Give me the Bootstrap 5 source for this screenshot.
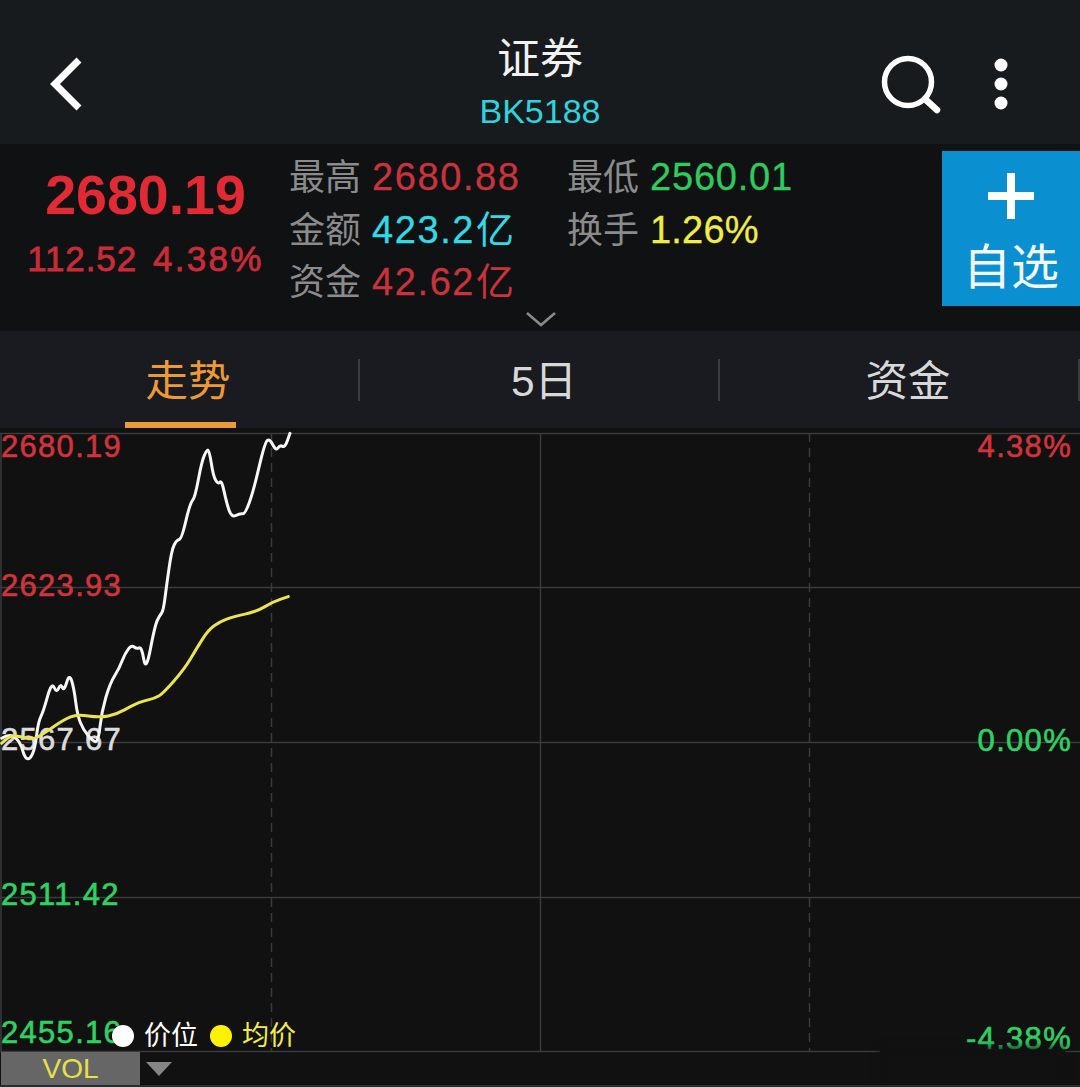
<!DOCTYPE html>
<html lang="zh-CN">
<head>
  <meta charset="UTF-8">
  <title>证券 BK5188</title>
  <meta name="viewport" content="width=device-width, initial-scale=1" />
  <link href="https://cdn.jsdelivr.net/npm/bootstrap@5.3.2/dist/css/bootstrap.min.css" rel="stylesheet">
  <style>
    body {
      background: #111112;
      font-family: "Liberation Sans", "Noto Sans CJK SC", sans-serif;
      overflow: hidden;
    }
    .top-bar { height: 144px; background: #171b1e; }
    .back-icon { left: 48px; top: 54px; }
    .title-main { font-size: 43px; line-height: 50px; color: #f2f2f2; padding-top: 34px; }
    .title-code { font-size: 34px; line-height: 40px; color: #2fd3dc; margin-top: 7px; }
    .search-icon { left: 878px; top: 50px; }
    .more-icon { left: 990px; top: 54px; }

    .quote-box { height: 187px; background: #101113; padding-top: 7px; }
    .price-col { width: 291px; }
    .price-big { font-size: 55.5px; line-height: 60px; font-weight: 700; color: #e22a35; margin-top: 14px; }
    .price-sub { font-size: 35px; line-height: 40px; color: #c92c36; margin-top: 14px; -webkit-text-stroke: .8px #c92c36; letter-spacing: .9px; }
    .price-sub span + span { margin-left: 16px; letter-spacing: 2.3px; }
    .stats-grid { display: grid; grid-template-columns: 278px 1fr; grid-auto-rows: 52.5px; flex-grow: 1; margin-left: -2px; }
    .stat-cell { font-size: 38px; line-height: 52.5px; white-space: nowrap; letter-spacing: 1.6px; -webkit-text-stroke: .3px; }
    .stat-name { font-size: 36px; letter-spacing: 0; color: #8b8b8b; margin-right: 11px; -webkit-text-stroke: 0; }
    .c-red { color: #c9333b; }
    .c-green { color: #2ecb5e; }
    .c-cyan { color: #30dbe6; }
    .c-yellow { color: #f2ec48; }
    .c-yi { font-size: 38px; letter-spacing: 0; margin-left: 1px; -webkit-text-stroke: 0; }
    .spacing-s { letter-spacing: .8px; }
    .spacing-xs { letter-spacing: .2px; }
    .add-btn { width: 138px; height: 155px; background: #0a8fd0; color: #f4f8fb; border-radius: 0; border: 0; padding: 0; display: flex; flex-direction: column; justify-content: flex-start; align-items: center; }
    .add-btn svg { display: block; margin-top: 22px; }
    .add-btn span { display: block; font-size: 48px; line-height: 56px; margin-top: 21px; white-space: nowrap; }
    .fold-icon { left: 525px; top: 311px; }

    .tab-bar { height: 97px; background: #191b20; }
    .tab-cell { width: 360px; font-size: 42.5px; color: #d8d8d8; }
    .tab-label { padding-top: 25px; line-height: 52px; }
    .tab-cell.on { color: #ec9a33; }
    .tab-line { left: 125px; width: 111px; height: 6px; bottom: 0; background: #ec9a33; }
    .tab-sep { width: 2px; height: 42px; background: #3a3c40; top: 28px; right: 0; }

    .chart-box { height: 659px; background: #111112; }
    .chart-svg { left: 0; top: 0; }
    .axis-txt { font-size: 31px; line-height: 36px; letter-spacing: 1.3px; white-space: nowrap; -webkit-text-stroke: .6px; }
    .axis-txt.c-red { color: #d1333b; }
    .axis-txt.c-green { color: #2ed162; }
    .axis-l { left: 1px; }
    .axis-r { right: 8px; }
    .y-1 { top: 1px; }
    .y-2 { top: 140px; }
    .y-3 { top: 294px; color: #dcdcdc; }
    .y-4 { top: 449px; }
    .y-5 { top: 587px; }
    .y-3r { top: 295px; }
    .y-5r { top: 593px; }
    .legend-row { left: 112px; top: 589px; font-size: 27px; line-height: 38px; }
    .dot { width: 22px; height: 22px; border-radius: 50%; }
    .dot-w { background: #fff; }
    .dot-y { background: #fff200; margin-left: 4px; }
    .leg-txt { margin-left: 2px; }
    .leg-txt-y { margin-left: 2px; }
    .vol-bar { left: 1px; right: 0; top: 624px; height: 33px; }
    .vol-tag { width: 139px; background: #666; color: #e6e04a; font-size: 28px; line-height: 33px; text-align: center; }
    .vol-arrow { margin-left: 6px; margin-top: 10px; }
    .smudge { left: 880px; width: 185px; top: 620px; height: 41px; background: #111112; filter: blur(4px); }
    .bottom-edge { left: 0; right: 0; bottom: 0; height: 2px; background: #2a2b2c; }
  </style>
</head>
<body>
  <!-- header -->
  <div class="top-bar position-relative text-center">
    <svg class="back-icon position-absolute" width="40" height="60" viewBox="0 0 40 60"><path d="M31 6 L7 30 L31 54" fill="none" stroke="#fff" stroke-width="7"/></svg>
    <div class="title-main">证券</div>
    <div class="title-code">BK5188</div>
    <svg class="search-icon position-absolute" width="66" height="66" viewBox="0 0 66 66"><circle cx="30" cy="32" r="23.5" fill="none" stroke="#fff" stroke-width="5.5"/><path d="M47 49 L59 60" stroke="#fff" stroke-width="6.500" stroke-linecap="round"/></svg>
    <svg class="more-icon position-absolute" width="22" height="60" viewBox="0 0 22 60"><circle cx="11" cy="11" r="6.500" fill="#fff"/><circle cx="11" cy="30" r="6.500" fill="#fff"/><circle cx="11" cy="49" r="6.500" fill="#fff"/></svg>
  </div>

  <!-- quote -->
  <div class="quote-box d-flex">
    <div class="price-col text-center">
      <div class="price-big">2680.19</div>
      <div class="price-sub"><span>112.52</span><span>4.38%</span></div>
    </div>
    <div class="stats-grid">
      <div class="stat-cell"><span class="stat-name">最高</span><span class="c-red">2680.88</span></div>
      <div class="stat-cell"><span class="stat-name">最低</span><span class="c-green spacing-s">2560.01</span></div>
      <div class="stat-cell"><span class="stat-name">金额</span><span class="c-cyan">423.2<span class="c-yi">亿</span></span></div>
      <div class="stat-cell"><span class="stat-name">换手</span><span class="c-yellow spacing-xs">1.26%</span></div>
      <div class="stat-cell"><span class="stat-name">资金</span><span class="c-red">42.62<span class="c-yi">亿</span></span></div>
    </div>
    <button type="button" class="btn add-btn">
      <svg width="46" height="46" viewBox="0 0 46 46"><path d="M23 0 V46 M0 23 H46" stroke="#fff" stroke-width="8"/></svg>
      <span>自选</span>
    </button>
  </div>
  <svg class="fold-icon position-absolute" width="32" height="16" viewBox="0 0 32 16"><path d="M2 2 L16 14 L30 2" fill="none" stroke="#8a8a8a" stroke-width="2.500"/></svg>

  <!-- tabs -->
  <div class="tab-bar d-flex">
    <div class="tab-cell on position-relative text-center">
      <div class="tab-label ps-3">走势</div>
      <div class="tab-line position-absolute"></div>
      <div class="tab-sep position-absolute"></div>
    </div>
    <div class="tab-cell position-relative text-center">
      <div class="tab-label ps-2">5日</div>
      <div class="tab-sep position-absolute"></div>
    </div>
    <div class="tab-cell position-relative text-center">
      <div class="tab-label ps-3">资金</div>
      <div class="tab-sep position-absolute"></div>
    </div>
  </div>

  <!-- chart -->
  <div class="chart-box position-relative">
    <svg class="chart-svg position-absolute" width="1080" height="659" viewBox="0 428 1080 659">
      <g stroke="#3b3b3b" stroke-width="1.500" fill="none">
        <path d="M0 433.500 H1080 M0 587.500 H1080 M0 742.500 H1080 M0 897.500 H1080 M0 1051.500 H880 M1065 1051.500 H1080"/>
        <path d="M1 433 V1051 M540.500 433 V1051"/>
        <path d="M271.500 433 V1051 M809.500 433 V1051" stroke-dasharray="9 6"/>
      </g>
    </svg>

    <span class="axis-txt axis-l y-1 c-red position-absolute">2680.19</span>
    <span class="axis-txt axis-l y-2 c-red position-absolute">2623.93</span>
    <span class="axis-txt axis-l y-3 position-absolute">2567.67</span>
    <span class="axis-txt axis-l y-4 c-green position-absolute">2511.42</span>
    <span class="axis-txt axis-l y-5 c-green position-absolute">2455.16</span>
    <span class="axis-txt axis-r y-1 c-red position-absolute">4.38%</span>
    <span class="axis-txt axis-r y-3r c-green position-absolute">0.00%</span>
    <span class="axis-txt axis-r y-5r c-green position-absolute">-4.38%</span>

    <svg class="chart-svg position-absolute" width="1080" height="659" viewBox="0 428 1080 659">
      <g transform="translate(0 425) scale(.3333)" fill="none" stroke-linejoin="round" stroke-linecap="round" stroke-width="9">
        <path id="priceLine" stroke="#f7f7f7"/>
        <path id="avgLine" stroke="#ebe44d"/>
      </g>
    </svg>

    <div class="smudge position-absolute"></div>

    <div class="legend-row position-absolute d-flex align-items-center gap-2">
      <span class="dot dot-w"></span><span class="text-white leg-txt">价位</span>
      <span class="dot dot-y"></span><span class="c-yellow leg-txt-y">均价</span>
    </div>

    <div class="vol-bar position-absolute d-flex">
      <div class="vol-tag">VOL</div>
      <svg class="vol-arrow" width="26" height="14" viewBox="0 0 26 14"><path d="M0 0 H26 L13 14 Z" fill="#868686"/></svg>
    </div>
    <div class="bottom-edge position-absolute"></div>
  </div>

  <script src="https://cdn.jsdelivr.net/npm/bootstrap@5.3.2/dist/js/bootstrap.bundle.min.js"></script>
  <script>
    const pricePts = [[5,940],[30,925],[60,950],[75,1000],[90,1003],[105,970],[115,890],[130,860],[155,770],[170,805],[182,775],[192,800],[208,745],[222,790],[232,870],[250,915],[280,950],[295,950],[305,860],[330,775],[358,730],[375,685],[395,660],[410,672],[425,665],[438,742],[465,600],[480,570],[490,558],[500,480],[515,375],[530,345],[545,342],[570,235],[585,218],[605,110],[620,75],[628,75],[640,155],[655,178],[665,165],[680,235],[695,278],[720,265],[735,268],[760,200],[795,50],[810,42],[828,78],[840,60],[855,68],[870,25]];
    const avgPts = [[5,955],[30,930],[60,935],[100,945],[140,920],[190,885],[230,868],[300,878],[350,868],[400,840],[430,828],[465,820],[490,805],[555,730],[590,670],[625,615],[660,590],[700,575],[770,560],[820,530],[865,515]];

    // round the corners a little: curve through the midpoints
    function smoothPath(pts) {
      let d = `M${pts[0][0]} ${pts[0][1]}`;
      for (let i = 1; i < pts.length - 1; i++) {
        const mx = (pts[i][0] + pts[i + 1][0]) / 2;
        const my = (pts[i][1] + pts[i + 1][1]) / 2;
        d += ` Q${pts[i][0]} ${pts[i][1]} ${mx} ${my}`;
      }
      const last = pts[pts.length - 1];
      return d + ` L${last[0]} ${last[1]}`;
    }

    document.getElementById('priceLine').setAttribute('d', smoothPath(pricePts));
    document.getElementById('avgLine').setAttribute('d', smoothPath(avgPts));
  </script>
</body>
</html>
